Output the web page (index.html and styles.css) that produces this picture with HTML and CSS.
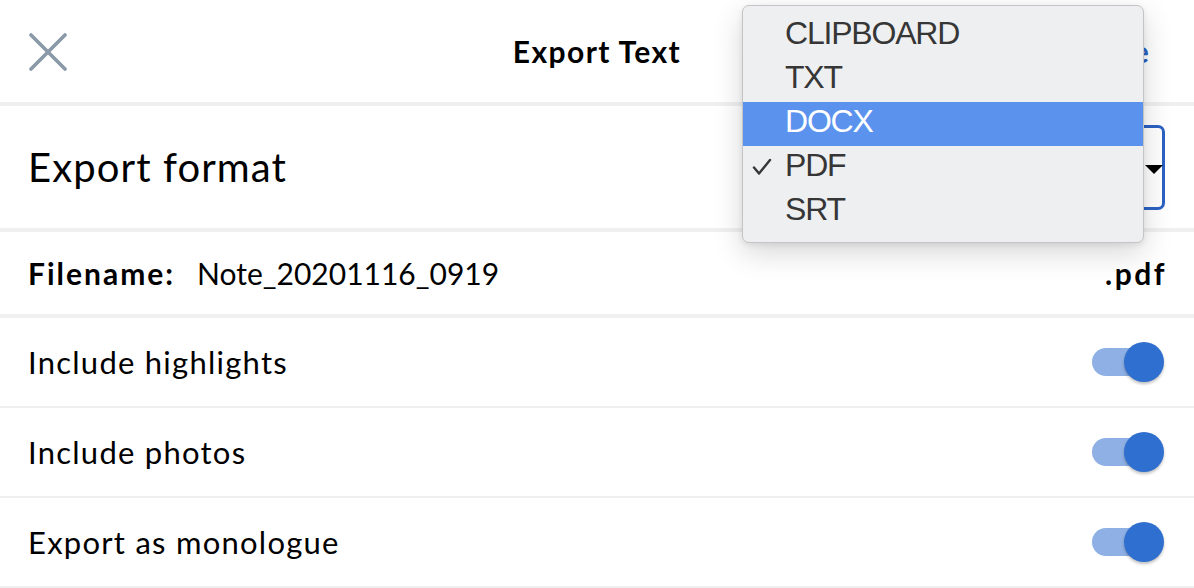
FILE: index.html
```html
<!DOCTYPE html>
<html lang="en">
<head>
<meta charset="utf-8">
<title>Export Text</title>
<link rel="stylesheet" href="styles.css">
</head>
<body>
<div class="page">
  <header class="header">
    <button class="close" aria-label="Close">
      <svg width="38" height="38" viewBox="0 0 38 38"><path d="M2 2 L36 36 M36 2 L2 36" stroke="#8a98a8" stroke-width="3.6" stroke-linecap="round" fill="none"/></svg>
    </button>
    <h1 class="title">Export Text</h1>
    <a class="save">Save</a>
  </header>
  <div class="sep thick sep-head"></div>
  <section class="row format-row">
    <span class="format-label">Export format</span>
    <div class="select">
      <span class="select-value">PDF</span>
      <span class="arrow"></span>
    </div>
  </section>
  <div class="sep thick"></div>
  <section class="row file-row">
    <span class="file-label">Filename:</span>
    <span class="file-name">Note_20201116_0919</span>
    <span class="file-ext">.pdf</span>
  </section>
  <div class="sep thick"></div>
  <section class="row toggle-row">
    <span class="label">Include highlights</span>
    <span class="toggle"><span class="track"></span><span class="knob"></span></span>
  </section>
  <div class="sep"></div>
  <section class="row toggle-row">
    <span class="label">Include photos</span>
    <span class="toggle"><span class="track"></span><span class="knob"></span></span>
  </section>
  <div class="sep"></div>
  <section class="row toggle-row">
    <span class="label">Export as monologue</span>
    <span class="toggle"><span class="track"></span><span class="knob"></span></span>
  </section>
  <div class="sep"></div>

  <ul class="menu">
    <li class="item">CLIPBOARD</li>
    <li class="item">TXT</li>
    <li class="item active">DOCX</li>
    <li class="item checked"><svg class="check" width="20" height="18" viewBox="0 0 20 18"><path d="M2 9.5 L7 15.5 L18 2" stroke="#363636" stroke-width="2.4" fill="none" stroke-linecap="round" stroke-linejoin="round"/></svg>PDF</li>
    <li class="item">SRT</li>
  </ul>
</div>
</body>
</html>
```
FILE: styles.css
```css
html, body {
  margin: 0;
  padding: 0;
  background: #ffffff;
}
body {
  font-family: Lato, "Open Sans", sans-serif;
  color: #000;
}
.page {
  position: relative;
  width: 1194px;
  height: 588px;
  overflow: hidden;
}
.header {
  height: 102px;
  display: flex;
  align-items: center;
  justify-content: space-between;
  padding: 0 44px 0 29px;
  position: relative;
}
.close {
  border: 0;
  background: none;
  padding: 0;
  width: 38px;
  height: 38px;
  margin-top: 1px;
}
.close svg { display: block; }
.title {
  position: absolute;
  left: 0;
  right: 0;
  text-align: center;
  margin: 0;
  font-size: 30px;
  font-weight: 700;
  letter-spacing: 1.4px;
  pointer-events: none;
}
.save {
  color: #2c62c4;
  font-weight: 700;
  font-size: 30px;
  letter-spacing: 1.2px;
}
.sep {
  height: 2px;
  background: #f0f0f0;
}
.sep.thick { height: 4px; }
.sep-head { background: #eef0f2; }
.row {
  display: flex;
  align-items: center;
  padding: 0 29px 0 28px;
}
.format-row {
  height: 122px;
  justify-content: space-between;
}
.format-label {
  font-size: 40px;
  letter-spacing: 1.1px;
}
.select {
  width: 300px;
  height: 85px;
  box-sizing: border-box;
  border: 3px solid #2c62c4;
  border-radius: 7px;
  display: flex;
  align-items: center;
  justify-content: space-between;
  padding: 4px 0 0 20px;
  font-size: 30px;
}
.arrow {
  width: 0;
  height: 0;
  border-left: 9px solid transparent;
  border-right: 9px solid transparent;
  border-top: 9px solid #000;
  margin-right: -1px;
}
.file-row {
  height: 82px;
  font-size: 30px;
}
.file-label {
  font-weight: 700;
  letter-spacing: 2px;
  margin-right: 22px;
}
.file-name {
  flex: 1;
}
.file-ext {
  font-weight: 700;
  letter-spacing: 2.5px;
  margin-right: -2px;
}
.toggle-row {
  height: 88px;
  justify-content: space-between;
}
.label {
  font-size: 31px;
  letter-spacing: 1.25px;
}
.toggle {
  position: relative;
  width: 72px;
  height: 40px;
  margin-right: 1px;
}
.track {
  position: absolute;
  left: 0;
  top: 6px;
  width: 60px;
  height: 28px;
  border-radius: 14px;
  background: #8eb0e4;
}
.knob {
  position: absolute;
  right: 0;
  top: 0;
  width: 40px;
  height: 40px;
  border-radius: 50%;
  background: #2f6fcf;
  box-shadow: 0 2px 3px rgba(0,0,0,0.25);
}
.menu {
  position: absolute;
  left: 742px;
  top: 5px;
  width: 402px;
  margin: 0;
  padding: 8px 0 8px;
  list-style: none;
  box-sizing: border-box;
  background: #eeeff1;
  border: 1px solid #c4c4c6;
  border-radius: 7px;
  box-shadow: 0 10px 30px rgba(0,0,0,0.16), 0 2px 6px rgba(0,0,0,0.08);
  font-family: "Liberation Sans", Arial, sans-serif;
  font-size: 32px;
  letter-spacing: -1.2px;
  color: #363636;
}
.item {
  height: 44px;
  box-sizing: border-box;
  line-height: 38px;
  padding: 0 0 6px 42px;
  position: relative;
}
.item.active {
  background: #5b92ee;
  color: #fff;
}
.check {
  position: absolute;
  left: 9px;
  top: 12px;
}
```
